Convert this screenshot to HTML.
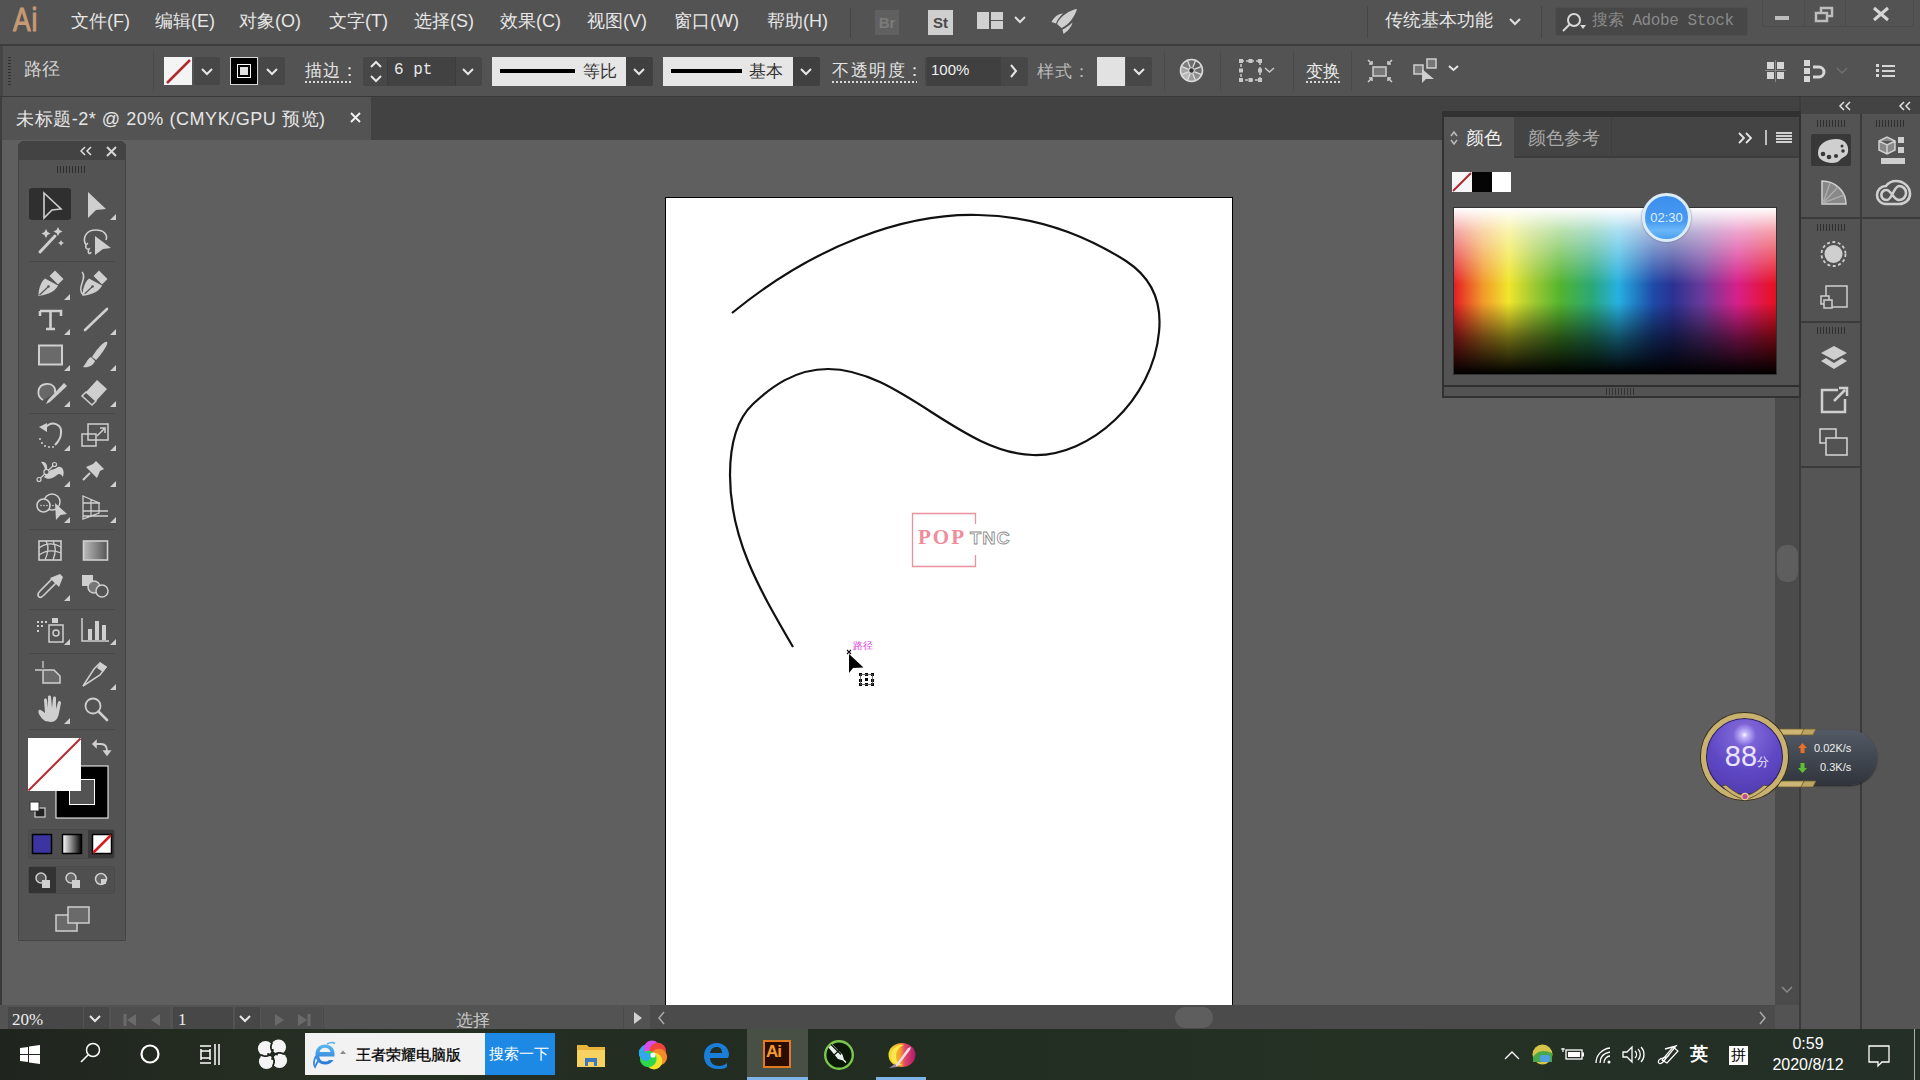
<!DOCTYPE html>
<html><head><meta charset="utf-8">
<style>
*{margin:0;padding:0;box-sizing:border-box}
html,body{width:1920px;height:1080px;overflow:hidden;background:#5f5f5f;font-family:"Liberation Sans",sans-serif;color:#e8e8e8}
.a{position:absolute}
#menubar{left:0;top:0;width:1920px;height:44px;background:#535353}
#menuline{left:0;top:44px;width:1920px;height:2px;background:#3d3d3d}
#ctrl{left:0;top:46px;width:1920px;height:50px;background:#535353}
#ctrlline{left:0;top:96px;width:1920px;height:2px;background:#383838}
#tabbar{left:0;top:97px;width:1920px;height:43px;background:#424242}
#canvas{left:0;top:140px;width:1800px;height:865px;background:#5f5f5f}
#status{left:0;top:1005px;width:1800px;height:24px;background:#535353}
#taskbar{left:0;top:1029px;width:1920px;height:51px;background:#222a21}
.menu{top:9px;font-size:18px;color:#e6e6e6;white-space:nowrap}
</style></head>
<body>
<div id="canvas" class="a"></div>
<div id="menubar" class="a"></div>
<div id="menuline" class="a"></div>
<div id="ctrl" class="a"></div>
<div id="ctrlline" class="a"></div>
<div id="tabbar" class="a"></div>
<div id="status" class="a"></div>
<div id="taskbar" class="a"></div>


<!-- TAB BAR -->
<div class="a" style="left:0;top:97px;width:371px;height:43px;background:#535353"></div>
<div class="a" style="left:0;top:97px;width:2px;height:43px;background:#3e3e3e"></div>
<div class="a" style="left:16px;top:107px;font-size:18px;color:#e6e6e6;white-space:nowrap;letter-spacing:0.55px">未标题-2* @ 20% (CMYK/GPU 预览)</div>
<svg class="a" style="left:349px;top:111px" width="13" height="13"><path d="M2 2 L11 11 M11 2 L2 11" stroke="#f0f0f0" stroke-width="2"/></svg>
<div class="a" style="left:0;top:140px;width:2px;height:865px;background:#3a3a3a"></div>

<!-- ARTBOARD -->
<div class="a" style="left:665px;top:197px;width:568px;height:812px;background:#fff;border:1px solid #000"></div>
<svg class="a" style="left:0;top:0" width="1920" height="1080"><path d="M732,313 C815,245 905,213 978,215 C1040,216 1090,238 1126,261 C1152,278 1162,303 1159,332 C1153,400 1090,457 1033,455 C960,453 900,369 828,369 C795,369 771,387 753,404 C736,420 730,445 730,475 C730,540 760,590 793,647" stroke="#111" stroke-width="2.2" fill="none"/></svg>


<!-- WATERMARK -->
<svg class="a" style="left:905px;top:505px" width="115" height="70">
<path d="M7.5 19 V8.5 H70.5 V19 M70.5 50 V61.5 H7.5 V19" stroke="#e9929e" stroke-width="1.3" fill="none"/>
<text x="13" y="39" font-family="Liberation Serif,serif" font-weight="bold" font-size="21" fill="#ef8d9b" letter-spacing="2">POP</text>
<text x="65" y="39.5" font-family="Liberation Sans,sans-serif" font-weight="bold" font-size="17" fill="#fff" stroke="#8a8a8a" stroke-width="0.8" letter-spacing="1" transform="translate(65 0) scale(1.08 1) translate(-65 0)">TNC</text>
</svg>
<!-- SMART GUIDE + CURSOR -->
<div class="a" style="left:853px;top:639px;font-size:10px;color:#e03fe0;white-space:nowrap;line-height:14px">路径</div>
<svg class="a" style="left:840px;top:645px" width="40" height="45">
<path d="M7 5 L11 9 M11 5 L7 9" stroke="#111" stroke-width="1.2"/>
<path d="M9 9 L9 28 L13 23 L23.5 22.5Z" fill="#000"/>
<g fill="#000"><rect x="19" y="28" width="3" height="3"/><rect x="25" y="28" width="3" height="3"/><rect x="31" y="28" width="3" height="3"/><rect x="19" y="34" width="3" height="3"/><rect x="31" y="34" width="3" height="3"/><rect x="19" y="38" width="3" height="3"/><rect x="25" y="38" width="3" height="3"/><rect x="31" y="38" width="3" height="3"/><rect x="25" y="33" width="3" height="3"/></g>
<rect x="20.5" y="29.5" width="12" height="10" stroke="#555" stroke-width="0.8" fill="none"/>
</svg>
<!-- TOOLBAR -->
<div class="a" style="left:18px;top:141px;width:108px;height:800px;background:#535353;border-radius:6px 6px 0 0;border:1px solid #464646"></div>
<div class="a" style="left:18px;top:141px;width:108px;height:19px;background:#434343;border-radius:6px 6px 0 0"></div>
<svg class="a" style="left:80px;top:146px" width="12" height="10"><path d="M5 1 L1 5 L5 9 M11 1 L7 5 L11 9" stroke="#e0e0e0" stroke-width="1.5" fill="none"/></svg>
<svg class="a" style="left:106px;top:146px" width="11" height="11"><path d="M1 1 L10 10 M10 1 L1 10" stroke="#d6d6d6" stroke-width="2"/></svg>
<div class="a" style="left:57px;top:166px;width:28px;height:7px;background:repeating-linear-gradient(90deg,#2e2e2e 0 1px,transparent 1px 3px)"></div>
<div class="a" style="left:29px;top:188px;width:42px;height:32px;background:#2f2f2f;border-radius:3px"></div>
<div class="a" style="left:29px;top:261px;width:86px;height:1px;background:#474747"></div>
<div class="a" style="left:29px;top:413px;width:86px;height:1px;background:#474747"></div>
<div class="a" style="left:29px;top:529px;width:86px;height:1px;background:#474747"></div>
<div class="a" style="left:29px;top:609px;width:86px;height:1px;background:#474747"></div>
<div class="a" style="left:29px;top:653px;width:86px;height:1px;background:#474747"></div>
<div class="a" style="left:29px;top:729px;width:86px;height:1px;background:#474747"></div>
<svg class="a" style="left:0;top:0" width="130" height="960">
<!-- selection -->
<path d="M44 193 L61 209 L52 210 L44 218Z" stroke="#cfcfcf" stroke-width="1.6" fill="none" stroke-linejoin="miter"/>
<!-- direct selection -->
<path d="M88 192 L106 209 L96 210 L88 218Z" fill="#cfcfcf"/><path d="M116 220 L116 214 L110 220Z" fill="#cfcfcf"/>
<!-- magic wand -->
<path d="M40 252 L55 236" stroke="#cfcfcf" stroke-width="3" stroke-linecap="round"/>
<path d="M46 229 l1.5 3 3 1.5 -3 1.5 -1.5 3 -1.5 -3 -3 -1.5 3 -1.5Z M58 227 l1.5 3 3 1.5 -3 1.5 -1.5 3 -1.5 -3 -3 -1.5 3 -1.5Z M61 240 l1 2 2 1 -2 1 -1 2 -1 -2 -2 -1 2 -1Z" fill="#cfcfcf"/>
<!-- lasso -->
<path d="M86 245 C82 238 86 230 96 230 C104 230 108 235 106 240" stroke="#cfcfcf" stroke-width="1.6" fill="none"/>
<path d="M88 243 C84 246 86 250 89 249 C87 253 90 255 91 252" stroke="#cfcfcf" stroke-width="1.5" fill="none"/>
<path d="M95 236 L111 248 L103 249 L95 255Z" fill="#cfcfcf"/>
<!-- pen -->
<g transform="translate(0 0)"><path d="M45 278.5 L58 285.5 C56 290 50 294.5 38.5 296 C38.5 290 40 283 45 278.5Z" fill="#cfcfcf"/><path d="M49.5 276 L55 270.5 L63.5 279 L58 284.5Z" fill="#cfcfcf"/><path d="M39.5 295 L48 287" stroke="#535353" stroke-width="1.2"/><circle cx="48.5" cy="286.5" r="1.3" fill="#535353"/></g><path d="M70 300 L70 294 L64 300Z" fill="#cfcfcf"/>
<!-- curvature pen -->
<g transform="translate(44 0)"><path d="M45 278.5 L58 285.5 C56 290 50 294.5 38.5 296 C38.5 290 40 283 45 278.5Z" fill="#cfcfcf"/><path d="M49.5 276 L55 270.5 L63.5 279 L58 284.5Z" fill="#cfcfcf"/><path d="M39.5 295 L48 287" stroke="#535353" stroke-width="1.2"/><circle cx="48.5" cy="286.5" r="1.3" fill="#535353"/></g>
<path d="M82 272 C86 276 82 282 81 287 C80 292 82 295 85 294" stroke="#cfcfcf" stroke-width="1.5" fill="none"/>
<!-- type -->
<path d="M40 311 H61 V316 M40 316 V311 M50.5 311 V329 M46 329 H55" stroke="#cfcfcf" stroke-width="2.6" fill="none"/><path d="M70 335 L70 329 L64 335Z" fill="#cfcfcf"/>
<!-- line -->
<path d="M85 330 L107 309" stroke="#cfcfcf" stroke-width="2.6" stroke-linecap="round"/><path d="M116 335 L116 329 L110 335Z" fill="#cfcfcf"/>
<!-- rect -->
<rect x="39" y="345.5" width="23" height="19" stroke="#cfcfcf" stroke-width="2" fill="#6a6a6a"/><path d="M70 371 L70 365 L64 371Z" fill="#cfcfcf"/>
<!-- paintbrush -->
<path d="M107 342 C109 344 100 356 96 360 L92 357 C95 352 104 340 107 342Z" fill="#cfcfcf"/><path d="M91 357 L95 361 C93 366 88 368 83 367 C86 364 87 359 91 357Z" fill="#cfcfcf"/><path d="M116 371 L116 365 L110 371Z" fill="#cfcfcf"/>
<!-- blob brush -->
<path d="M43 400 C36 396 37 385 46 384 C53 383 56 388 55 393" stroke="#cfcfcf" stroke-width="1.8" fill="#686868"/>
<path d="M64 383 L67 386 L50 402 L46 404 L48 400Z" fill="#cfcfcf"/><path d="M70 407 L70 401 L64 407Z" fill="#cfcfcf"/>
<!-- eraser -->
<path d="M97 380 L107 389 L96 401 L86 392Z" fill="#cfcfcf"/><path d="M86 392 L96 401 L92 405 L82 396Z" stroke="#cfcfcf" stroke-width="1.5" fill="#535353"/><path d="M116 407 L116 401 L110 407Z" fill="#cfcfcf"/>
<!-- rotate -->
<path d="M45 428 C52 420 62 424 61 433 C61 438 58 442 55 445" stroke="#cfcfcf" stroke-width="2" fill="none"/>
<path d="M39 427 L47 423 L47 432Z" fill="#cfcfcf"/>
<g fill="#cfcfcf"><circle cx="40" cy="439" r="1"/><circle cx="42" cy="443" r="1"/><circle cx="45" cy="446" r="1"/><circle cx="49" cy="447" r="1"/><circle cx="53" cy="447" r="1"/></g><path d="M70 451 L70 445 L64 451Z" fill="#cfcfcf"/>
<!-- scale -->
<rect x="82" y="434" width="14" height="12" stroke="#cfcfcf" stroke-width="1.5" fill="none"/><rect x="88" y="424" width="20" height="16" stroke="#cfcfcf" stroke-width="1.5" fill="none"/><path d="M97 436 L104 429 M100 428 H105 V433" stroke="#cfcfcf" stroke-width="1.5" fill="none"/><path d="M116 451 L116 445 L110 451Z" fill="#cfcfcf"/>
<!-- warp -->
<path d="M41 462 C45 461 48 465 47 469 C51 471 55 469 58 467 C62 466 65 470 63 477 C61 474 59 473 57 475 C53 479 47 480 44 477 C47 473 45 466 41 462Z" fill="#cfcfcf"/><path d="M39 479.5 L54.5 464.5" stroke="#535353" stroke-width="2.6"/><path d="M39 479.5 L54.5 464.5" stroke="#cfcfcf" stroke-width="1.2"/><circle cx="39" cy="479.5" r="2" stroke="#cfcfcf" stroke-width="1.2" fill="#535353"/><circle cx="54.5" cy="464.5" r="2" stroke="#cfcfcf" stroke-width="1.2" fill="#535353"/><circle cx="46.5" cy="472" r="2.6" stroke="#cfcfcf" stroke-width="1.2" fill="#535353"/><path d="M70 487 L70 481 L64 487Z" fill="#cfcfcf"/>
<!-- pin -->
<path d="M96 461 L104 469 L100 471 L97 478 L86 467 L93 464Z" fill="#cfcfcf"/><path d="M90 473 L83 480" stroke="#cfcfcf" stroke-width="2"/><path d="M116 487 L116 481 L110 487Z" fill="#cfcfcf"/>
<!-- shape builder -->
<circle cx="52" cy="502" r="8" stroke="#cfcfcf" stroke-width="1.5" fill="none"/><circle cx="43.5" cy="505.5" r="6.5" stroke="#cfcfcf" stroke-width="1.5" fill="#535353"/>
<g fill="#cfcfcf"><circle cx="41" cy="505.5" r=".8"/><circle cx="44" cy="505.5" r=".8"/><circle cx="47" cy="505.5" r=".8"/><circle cx="50" cy="505.5" r=".8"/><circle cx="53" cy="505.5" r=".8"/></g>
<path d="M55 503 L67 514 L60.5 515 L56 520Z" fill="#cfcfcf"/><path d="M70 523 L70 517 L64 523Z" fill="#cfcfcf"/>
<!-- perspective grid -->
<path d="M83 496 L99 503 V513 L83 519Z M83 503 H100 M83 511 H108 M91 499 V517 M83 516 H108" stroke="#cfcfcf" stroke-width="1.3" fill="none"/><path d="M116 523 L116 517 L110 523Z" fill="#cfcfcf"/>
<!-- mesh -->
<rect x="39" y="541" width="22" height="19" stroke="#cfcfcf" stroke-width="1.6" fill="none"/><path d="M39 548 C46 543 54 543 61 547 M39 555 C46 550 54 550 61 553 M46 541 C50 548 47 555 45 560 M53 541 C57 548 55 555 53 560" stroke="#cfcfcf" stroke-width="1.3" fill="none"/>
<!-- gradient -->
<defs><linearGradient id="gr" x1="0" x2="1"><stop offset="0" stop-color="#bbb"/><stop offset="1" stop-color="#555"/></linearGradient><linearGradient id="gr2" x1="0" x2="1"><stop offset="0" stop-color="#fff"/><stop offset="1" stop-color="#000"/></linearGradient></defs>
<rect x="83.5" y="541" width="24" height="19" stroke="#cfcfcf" stroke-width="1.6" fill="url(#gr)"/>
<!-- eyedropper -->
<path d="M39 597 C37 595 38 593 40 591 L52 579 L56 583 L44 595 C42 597 40 598 39 597Z" stroke="#cfcfcf" stroke-width="1.6" fill="none"/><path d="M50 578 L60 574 L63 577 L59 587Z" fill="#cfcfcf"/><path d="M70 601 L70 595 L64 601Z" fill="#cfcfcf"/>
<!-- blend -->
<rect x="82" y="575" width="11" height="11" fill="#cfcfcf"/><circle cx="94" cy="587" r="6" stroke="#cfcfcf" stroke-width="1.5" fill="#777"/><circle cx="102" cy="591" r="6" stroke="#cfcfcf" stroke-width="1.5" fill="#535353"/>
<!-- symbol sprayer -->
<g fill="#cfcfcf"><rect x="37" y="621" width="2" height="2"/><rect x="41" y="621" width="2" height="2"/><rect x="45" y="621" width="2" height="2"/><rect x="37" y="625" width="2" height="2"/><rect x="41" y="625" width="2" height="2"/><rect x="37" y="630" width="2" height="2"/></g><rect x="49" y="625" width="14" height="17" stroke="#cfcfcf" stroke-width="1.5" fill="none"/><circle cx="56" cy="633" r="3" stroke="#cfcfcf" stroke-width="1.5" fill="none"/><rect x="52" y="618" width="6" height="5" fill="#cfcfcf"/><path d="M70 645 L70 639 L64 645Z" fill="#cfcfcf"/>
<!-- graph -->
<path d="M82 618 V641 H109" stroke="#cfcfcf" stroke-width="1.5" fill="none"/><rect x="88" y="629" width="4" height="11" fill="#cfcfcf"/><rect x="95" y="621" width="4" height="19" fill="#cfcfcf"/><rect x="102" y="625" width="4" height="15" fill="#cfcfcf"/><path d="M116 645 L116 639 L110 645Z" fill="#cfcfcf"/>
<!-- artboard -->
<path d="M43 661 V668 M35 670 H42" stroke="#cfcfcf" stroke-width="1.3"/><path d="M43 670 H54 L60 676 V683 H43Z" stroke="#cfcfcf" stroke-width="1.5" fill="#6a6a6a"/>
<!-- slice/knife -->
<path d="M100 663 L106 667 L100 675 L83 686 L94 669Z" stroke="#cfcfcf" stroke-width="1.5" fill="none"/><path d="M100 662 L107 667 L103 672 L97 668Z" fill="#cfcfcf"/><path d="M116 690 L116 684 L110 690Z" fill="#cfcfcf"/>
<!-- hand -->
<path d="M45 721 C40 717 37 712 39 710 C41 709 43 712 45 713 L44 700 C44 698 47 698 47 700 L48 708 L48 697 C48 695 51 695 51 697 L52 708 L53 698 C53 696 56 696 56 698 L56 709 L58 702 C59 700 61 701 61 703 L59 713 C58 719 55 722 51 722Z" fill="#cfcfcf"/><path d="M70 724 L70 718 L64 724Z" fill="#cfcfcf"/>
<!-- zoom -->
<circle cx="93" cy="706" r="7.5" stroke="#cfcfcf" stroke-width="1.8" fill="none"/><path d="M98.5 711.5 L107 720" stroke="#cfcfcf" stroke-width="2.6" stroke-linecap="round"/>
<!-- fill/stroke -->
<rect x="56" y="766" width="52" height="52" fill="#000" stroke="#fff" stroke-width="1"/>
<rect x="69.5" y="779.5" width="25" height="25" fill="#535353" stroke="#fff" stroke-width="1"/>
<rect x="28" y="738" width="53" height="53" fill="#fff"/>
<path d="M28.5 790.5 L80.5 738.5" stroke="#b7282e" stroke-width="2"/>
<!-- swap -->
<path d="M96 744 L101 744 C105 744 107 747 107 751" stroke="#cfcfcf" stroke-width="1.8" fill="none"/><path d="M96 741 L93 744 L96 747Z M104 751 L107 755 L110 751Z" fill="#cfcfcf" stroke="#cfcfcf" stroke-width="1.5"/>
<!-- default -->
<rect x="35" y="808" width="10" height="9" fill="#222" stroke="#cfcfcf" stroke-width="1.2"/><rect x="30" y="802" width="9" height="9" fill="#fff" stroke="#333" stroke-width="1"/>
<!-- color mode buttons -->
<rect x="28.5" y="829.5" width="86" height="29" fill="#4f4f4f" stroke="#4a4a4a" rx="3"/>
<rect x="88" y="830" width="26" height="28" fill="#3a3a3a"/>
<rect x="32.5" y="834.5" width="19" height="19" fill="#3c34a0" stroke="#000" stroke-width="1.5"/>
<rect x="62.5" y="834.5" width="19" height="19" fill="url(#gr2)" stroke="#000" stroke-width="1.5"/>
<rect x="92.5" y="834.5" width="19" height="19" fill="#fff" stroke="#000" stroke-width="1.5"/><path d="M93 853 L111 835" stroke="#d01e22" stroke-width="2.5"/>
<!-- draw modes -->
<rect x="28.5" y="866.5" width="86" height="27" fill="#4f4f4f" stroke="#4a4a4a" rx="3"/>
<rect x="29" y="867" width="27" height="26" fill="#333"/>
<circle cx="41" cy="878" r="5" stroke="#cfcfcf" stroke-width="1.5" fill="#555"/><rect x="42" y="880" width="8" height="8" fill="#cfcfcf"/>
<circle cx="71" cy="878" r="5" stroke="#cfcfcf" stroke-width="1.5" fill="#666"/><rect x="72" y="880" width="8" height="8" fill="#cfcfcf"/>
<circle cx="101" cy="879" r="5.5" stroke="#cfcfcf" stroke-width="1.5" fill="#666"/><rect x="101" y="879" width="5" height="5" fill="#cfcfcf"/>
<!-- screen mode -->
<rect x="56" y="915" width="21" height="16" stroke="#cfcfcf" stroke-width="1.5" fill="#6a6a6a"/><rect x="68" y="907" width="21" height="16" stroke="#cfcfcf" stroke-width="1.5" fill="#6a6a6a"/>
</svg>

<!-- V SCROLL -->
<div class="a" style="left:1775px;top:140px;width:25px;height:865px;background:#4b4b4b"></div>
<div class="a" style="left:1777px;top:545px;width:21px;height:37px;background:#5e5e5e;border-radius:9px"></div>
<svg class="a" style="left:1780px;top:985px" width="14" height="10"><path d="M2 2 L7 7 L12 2" stroke="#8a8a8a" stroke-width="1.5" fill="none"/></svg>
<!-- DOCK -->
<div class="a" style="left:1800px;top:97px;width:120px;height:932px;background:#555"></div>
<div class="a" style="left:1799px;top:97px;width:2px;height:932px;background:#3b3b3b"></div>
<div class="a" style="left:1860px;top:114px;width:2px;height:915px;background:#3b3b3b"></div>
<div class="a" style="left:1801px;top:97px;width:119px;height:17px;background:#434343"></div>
<svg class="a" style="left:1838px;top:101px" width="14" height="10"><path d="M6 1 L2 5 L6 9 M12 1 L8 5 L12 9" stroke="#e0e0e0" stroke-width="1.5" fill="none"/></svg>
<svg class="a" style="left:1898px;top:101px" width="14" height="10"><path d="M6 1 L2 5 L6 9 M12 1 L8 5 L12 9" stroke="#e0e0e0" stroke-width="1.5" fill="none"/></svg>
<div class="a" style="left:1801px;top:114px;width:59px;height:103px;background:#535353"></div>
<div class="a" style="left:1862px;top:114px;width:58px;height:103px;background:#535353"></div>
<div class="a" style="left:1801px;top:217px;width:119px;height:2px;background:#3b3b3b"></div>
<div class="a" style="left:1801px;top:219px;width:59px;height:102px;background:#535353"></div>
<div class="a" style="left:1801px;top:321px;width:59px;height:2px;background:#3b3b3b"></div>
<div class="a" style="left:1801px;top:323px;width:59px;height:143px;background:#535353"></div>
<div class="a" style="left:1801px;top:466px;width:59px;height:2px;background:#3b3b3b"></div>
<div class="a" style="left:1817px;top:120px;width:28px;height:7px;background:repeating-linear-gradient(90deg,#2e2e2e 0 1px,transparent 1px 3px)"></div><div class="a" style="left:1876px;top:120px;width:28px;height:7px;background:repeating-linear-gradient(90deg,#2e2e2e 0 1px,transparent 1px 3px)"></div><div class="a" style="left:1817px;top:224px;width:28px;height:7px;background:repeating-linear-gradient(90deg,#2e2e2e 0 1px,transparent 1px 3px)"></div><div class="a" style="left:1817px;top:327px;width:28px;height:7px;background:repeating-linear-gradient(90deg,#2e2e2e 0 1px,transparent 1px 3px)"></div>
<div class="a" style="left:1811px;top:134px;width:40px;height:32px;background:#383838;border-radius:2px"></div>
<svg class="a" style="left:0;top:0" width="1920" height="1080">
<!-- palette -->
<path d="M1818 153 C1818 143 1828 139 1836 139 C1846 139 1849 146 1848 152 C1847 157 1842 157 1840 160 C1838 163 1832 164 1826 162 C1820 160 1818 157 1818 153Z" fill="#cfcfcf"/>
<g fill="#383838"><circle cx="1823" cy="154" r="2.3"/><circle cx="1829" cy="157" r="2.3"/><circle cx="1836" cy="156" r="2.1"/><circle cx="1843" cy="151" r="1.8"/><circle cx="1842" cy="146" r="1.5"/></g>
<!-- color guide -->
<path d="M1822 181 V204 H1846 C1846 191 1835 181 1822 181Z" stroke="#cfcfcf" stroke-width="1.5" fill="#888"/>
<path d="M1823 203 L1830 183 M1823 203 L1838 187 M1823 203 L1844 195" stroke="#aaa" stroke-width="1.5"/>
<!-- appearance -->
<circle cx="1833.5" cy="254" r="9" fill="#cfcfcf"/><circle cx="1833.5" cy="254" r="12" stroke="#cfcfcf" stroke-width="1.8" stroke-dasharray="3 2.5" fill="none"/>
<!-- transform-ish -->
<rect x="1826" y="286" width="21" height="21" stroke="#cfcfcf" stroke-width="1.5" fill="none"/><rect x="1821" y="296" width="8" height="8" stroke="#cfcfcf" stroke-width="1.5" fill="#535353"/><rect x="1824" y="300" width="8" height="8" stroke="#cfcfcf" stroke-width="1.5" fill="#535353"/>
<!-- layers -->
<path d="M1821 353 L1834 346 L1847 353 L1834 360Z" fill="#cfcfcf"/><path d="M1821 361 L1826 358 L1834 363 L1842 358 L1847 361 L1834 369Z" fill="#cfcfcf"/>
<!-- export -->
<path d="M1838 390 H1822 V412 H1845 V399" stroke="#cfcfcf" stroke-width="2.5" fill="none"/><path d="M1834 401 L1845 390 M1839 388 H1847 V396" stroke="#cfcfcf" stroke-width="2.5" fill="none"/>
<!-- artboards -->
<rect x="1820" y="429" width="16" height="14" stroke="#cfcfcf" stroke-width="1.6" fill="none"/><rect x="1826" y="438" width="21" height="17" stroke="#cfcfcf" stroke-width="1.6" fill="#535353"/>
<!-- libraries col2 -->
<path d="M1879 141 L1887 137 L1895 141 V150 L1887 154 L1879 150Z M1879 141 L1887 145 L1895 141 M1887 145 V154" stroke="#cfcfcf" stroke-width="1.5" fill="#888"/>
<rect x="1898" y="137" width="6" height="6" fill="#cfcfcf"/><rect x="1898" y="147" width="6" height="6" fill="#cfcfcf"/>
<rect x="1881" y="158" width="24" height="6" fill="#cfcfcf"/>
<!-- CC -->
<path d="M1886 204 C1880 204 1877 199 1877 195 C1877 190 1881 186 1886 186 C1889 182 1893 181 1896 181 C1904 181 1910 187 1910 194 C1910 200 1905 204 1899 204Z" stroke="#cfcfcf" stroke-width="2.6" fill="none"/>
<path d="M1899 200 C1893 200 1891 189 1886 190 C1882 190 1881 194 1881.5 196 C1882 199 1884 200 1887 200 C1892 200 1894 186 1899 186 C1903 186 1906 189 1906 193 C1906 197 1903 200 1899 200Z" stroke="#cfcfcf" stroke-width="2.6" fill="none"/>
</svg>
<!-- COLOR PANEL -->
<div class="a" style="left:1442px;top:111px;width:359px;height:287px;background:#535353;border:2px solid #313131;border-top-width:6px"></div>
<div class="a" style="left:1514px;top:117px;width:285px;height:41px;background:#444;border-bottom:2px solid #3c3c3c"></div>
<div class="a" style="left:1611px;top:117px;width:1px;height:41px;background:#3e3e3e"></div>
<svg class="a" style="left:1449px;top:129px" width="10" height="18"><path d="M2 7 L5 3 L8 7 M2 11 L5 15 L8 11" stroke="#bdbdbd" stroke-width="1.5" fill="none"/></svg>
<div class="a" style="left:1466px;top:126px;font-size:18px;color:#efefef">颜色</div>
<div class="a" style="left:1528px;top:126px;font-size:18px;color:#a9a9a9">颜色参考</div>
<svg class="a" style="left:1737px;top:131px" width="18" height="14"><path d="M2 2 L7 7 L2 12 M9 2 L14 7 L9 12" stroke="#e6e6e6" stroke-width="1.8" fill="none"/></svg>
<div class="a" style="left:1765px;top:130px;width:2px;height:15px;background:#bdbdbd"></div>
<div class="a" style="left:1776px;top:132px;width:16px;height:11px;background:repeating-linear-gradient(#d0d0d0 0 2px,transparent 2px 3px)"></div>
<svg class="a" style="left:1452px;top:172px" width="60" height="20"><rect x="0" y="0" width="20" height="20" fill="#f7f7f7"/><path d="M1 19 L19 1" stroke="#b0282c" stroke-width="2"/><rect x="20" y="0" width="20" height="20" fill="#050505"/><rect x="40" y="0" width="19" height="20" fill="#fff"/></svg>
<div class="a" style="left:1453px;top:207px;width:324px;height:168px;border:1px solid #333;background:linear-gradient(to bottom,#fff 0%,rgba(255,255,255,0.6) 14%,rgba(255,255,255,0) 46%,rgba(0,0,0,0) 57%,rgba(0,0,0,0.55) 78%,#000 100%),linear-gradient(to right,#e31e24 0%,#f29a2a 9%,#f0e62c 17%,#9cc832 25%,#52b42e 33%,#2aa87a 43%,#26b0e2 51%,#1e4aa8 62%,#2a3292 68%,#6a3a9a 77%,#d8208a 88%,#e8101e 100%)"></div>
<div class="a" style="left:1442px;top:385px;width:359px;height:2px;background:#2f2f2f"></div>
<div class="a" style="left:1606px;top:388px;width:30px;height:7px;background:repeating-linear-gradient(90deg,#333 0 1px,transparent 1px 3px)"></div>
<!-- TIMER -->
<div class="a" style="left:1642px;top:193px;width:49px;height:49px;border-radius:50%;background:linear-gradient(#3b8eec 0%,#4a9cf2 60%,#6ab8f8 80%,#4a9cf0 100%);border:3px solid #dcecfb;box-shadow:0 0 2px #666"></div>
<div class="a" style="left:1642px;top:210px;width:49px;text-align:center;font-size:13px;color:#dceeff">02:30</div>

<!-- STATUS BAR -->
<div class="a" style="left:650px;top:1005px;width:1125px;height:24px;background:#4b4b4b"></div>
<div class="a" style="left:1175px;top:1007px;width:38px;height:21px;background:#5e5e5e;border-radius:10px"></div>
<svg class="a" style="left:656px;top:1010px" width="12" height="16"><path d="M8 2 L3 8 L8 14" stroke="#aaa" stroke-width="1.5" fill="none"/></svg>
<svg class="a" style="left:1756px;top:1010px" width="12" height="16"><path d="M4 2 L9 8 L4 14" stroke="#aaa" stroke-width="1.5" fill="none"/></svg>
<div class="a" style="left:8px;top:1007px;width:75px;height:22px;background:#474747"></div>
<div class="a" style="left:84px;top:1007px;width:25px;height:22px;background:#474747"></div>
<div class="a" style="left:12px;top:1010px;font-size:17px;color:#eee;font-family:'Liberation Serif',serif">20%</div>
<svg class="a" style="left:88px;top:1014px" width="14" height="10"><path d="M2 2 L7 7 L12 2" stroke="#e6e6e6" stroke-width="2" fill="none"/></svg>
<div class="a" style="left:111px;top:1007px;width:59px;height:22px;background:#4e4e4e"></div>
<svg class="a" style="left:120px;top:1011px" width="50" height="18"><path d="M5 3 V15" stroke="#6a6a6a" stroke-width="3"/><path d="M16 3 L7 9 L16 15Z M40 3 L31 9 L40 15Z" fill="#6a6a6a"/></svg>
<div class="a" style="left:173px;top:1007px;width:60px;height:22px;background:#474747"></div>
<div class="a" style="left:235px;top:1007px;width:25px;height:22px;background:#474747"></div>
<div class="a" style="left:178px;top:1010px;font-size:17px;color:#eee;font-family:'Liberation Serif',serif">1</div>
<svg class="a" style="left:238px;top:1014px" width="14" height="10"><path d="M2 2 L7 7 L12 2" stroke="#e6e6e6" stroke-width="2" fill="none"/></svg>
<div class="a" style="left:261px;top:1007px;width:61px;height:22px;background:#4e4e4e"></div>
<svg class="a" style="left:270px;top:1011px" width="50" height="18"><path d="M5 3 L14 9 L5 15Z M28 3 L37 9 L28 15Z" fill="#6a6a6a"/><path d="M39 3 V15" stroke="#6a6a6a" stroke-width="3"/></svg>
<div class="a" style="left:323px;top:1007px;width:1px;height:22px;background:#4a4a4a"></div>
<div class="a" style="left:456px;top:1009px;font-size:17px;color:#c8c8c8">选择</div>
<div class="a" style="left:623px;top:1007px;width:1px;height:22px;background:#4a4a4a"></div>
<svg class="a" style="left:632px;top:1010px" width="12" height="16"><path d="M2 2 L10 8 L2 14Z" fill="#d0d0d0"/></svg>
<!-- TASKBAR -->
<div class="a" style="left:0;top:1029px;width:1920px;height:51px;background:linear-gradient(90deg,#1f251e 0%,#272f23 18%,#222c21 40%,#243123 70%,#242f27 100%)"></div>
<div class="a" style="left:1914px;top:1029px;width:1px;height:51px;background:#aab0a8"></div>
<svg class="a" style="left:0;top:1029px" width="1920" height="51">
<g fill="#fff"><path d="M20 19 L28 18 V25 H20Z M29 17.5 L40 16 V25 H29Z M20 26 H28 V33 L20 32Z M29 26 H40 V35 L29 33.5Z"/></g>
<circle cx="93" cy="21" r="6.5" stroke="#fff" stroke-width="1.5" fill="none"/><path d="M88 26 L81 33" stroke="#fff" stroke-width="1.6"/>
<circle cx="150" cy="25" r="8.5" stroke="#fff" stroke-width="2.2" fill="none"/>
<path d="M200 17 H211 M200 34 H211 M201 20 V31 M210 20 V31 M201 22 H210 M201 29 H210 M215 15 V36 M219 15 V36" stroke="#fff" stroke-width="1.5" fill="none"/>
<circle cx="265.5" cy="19.5" r="7.6" fill="#f4f4f4"/><circle cx="278.5" cy="18" r="7.6" fill="#f4f4f4"/><circle cx="279.5" cy="31.5" r="7.6" fill="#f4f4f4"/><circle cx="266.5" cy="32.5" r="7.6" fill="#f4f4f4"/><path d="M277.8 25.6 L276.5 25.3 L275.3 24.9 L274.1 24.2 L273.1 23.4 L272.3 22.4 L271.6 21.2 L271.2 20.0 L270.9 18.7 L270.9 17.3 L271.2 16.0 L271.6 14.8 L272.3 13.6 M273.1 20.2 L272.8 21.5 L272.4 22.7 L271.7 23.9 L270.9 24.9 L269.9 25.7 L268.7 26.4 L267.5 26.8 L266.2 27.1 L264.8 27.1 L263.5 26.8 L262.3 26.4 L261.1 25.7 M267.2 24.9 L268.5 25.2 L269.7 25.6 L270.9 26.3 L271.9 27.1 L272.7 28.1 L273.4 29.3 L273.8 30.5 L274.1 31.8 L274.1 33.2 L273.8 34.5 L273.4 35.7 L272.7 36.9 M271.9 30.8 L272.2 29.5 L272.6 28.3 L273.3 27.1 L274.1 26.1 L275.1 25.3 L276.3 24.6 L277.5 24.2 L278.8 23.9 L280.2 23.9 L281.5 24.2 L282.7 24.6 L283.9 25.3" stroke="#1f2420" stroke-width="1.8" fill="none"/>
</svg>
<div class="a" style="left:305px;top:1033px;width:180px;height:42px;background:#f2f2f2"></div>
<div class="a" style="left:485px;top:1033px;width:70px;height:42px;background:#1e88e5"></div>
<div class="a" style="left:489px;top:1045px;font-size:15px;color:#fff;white-space:nowrap">搜索一下</div>
<div class="a" style="left:356px;top:1046px;font-size:15px;color:#000;white-space:nowrap;-webkit-text-stroke:0.3px #000">王者荣耀电脑版</div>
<svg class="a" style="left:310px;top:1040px" width="40" height="30"><defs><linearGradient id="ieg" x1="0" y1="0" x2="0" y2="1"><stop offset="0" stop-color="#5ab8f0"/><stop offset="1" stop-color="#2a78d8"/></linearGradient></defs><path d="M24.5 13.5 C24.5 8 20.5 4.5 15 4.5 C9.5 4.5 5.5 8.5 5.5 14.5 C5.5 20.5 9.5 24.5 15 24.5 C19 24.5 22 22.5 23.5 20 L19 20 C18 21 16.5 21.5 15 21.5 C11.5 21.5 9.5 19.5 9.3 16.5 H24.5Z M9.5 12 C10 9.5 12 7.8 15 7.8 C18 7.8 20 9.5 20.5 12Z" fill="url(#ieg)"/><path d="M6 16 C3.5 21 3.5 25 5 27 C6 25 7 22 9 20" stroke="#3a88dc" stroke-width="1.8" fill="none"/><path d="M17 4 C20 2.5 23 2 25 3.5" stroke="#5ab0ea" stroke-width="1.6" fill="none"/><path d="M30 14 L33 10.5 L36 14Z" fill="#8a8a8a"/></svg>
<!-- folder -->
<svg class="a" style="left:575px;top:1041px" width="32" height="28"><path d="M2 4 H12 L14 6 H30 V26 H2Z" fill="#e8b53a"/><path d="M2 9 H30 V26 H2Z" fill="#f7d260"/><rect x="10" y="17" width="12" height="8" fill="#3b78c0"/><rect x="13" y="21" width="6" height="4" fill="#f7d260"/></svg>
<!-- colorful -->
<svg class="a" style="left:637px;top:1039px" width="32" height="32" viewBox="0 0 32 32"><defs><clipPath id="cpb"><path d="M16 16 L3.14 31.32 L-3.70 19.47 L-2.79 9.16Z"/></clipPath></defs><circle cx="10.17" cy="13.88" r="8.3" fill="#30a8ec"/><circle cx="14.92" cy="9.89" r="8.3" fill="#d84ee8"/><circle cx="20.75" cy="12.01" r="8.3" fill="#f0443c"/><circle cx="21.83" cy="18.12" r="8.3" fill="#f58a2a"/><circle cx="17.08" cy="22.11" r="8.3" fill="#f2e22a"/><circle cx="11.25" cy="19.99" r="8.3" fill="#2ed84a"/><circle cx="10.17" cy="13.88" r="8.3" fill="#30a8ec" clip-path="url(#cpb)"/><circle cx="16" cy="16" r="2.6" fill="#f4fff4"/></svg>
<!-- edge -->
<svg class="a" style="left:701px;top:1041px" width="30" height="28"><path d="M27 17 H9 C9 22 13 25 18 25 C21 25 24 24 26 22 V26 C23 28 20 28 17 28 C8 28 3 22 3 15 C3 7 9 2 16 2 C23 2 28 7 28 14Z M9 12 H21 C21 8 19 6 16 6 C12 6 10 8 9 12Z" fill="#1a7ed8"/></svg>
<!-- Ai active -->
<div class="a" style="left:747px;top:1029px;width:61px;height:51px;background:#485046"></div>
<div class="a" style="left:747px;top:1077px;width:61px;height:3px;background:#7fb4e8"></div>
<div class="a" style="left:763px;top:1040px;width:28px;height:28px;background:#2b0d00;border:2px solid #e07a20"></div>
<div class="a" style="left:766px;top:1042px;font-size:17px;font-weight:bold;color:#f39a32;letter-spacing:-1px">Ai</div>
<!-- green pen -->
<svg class="a" style="left:823px;top:1039px" width="32" height="32"><circle cx="16" cy="16" r="13.8" stroke="#7cc84a" stroke-width="2.4" fill="#0b1709"/><path d="M5.5 8.5 L9 5 L19.5 15.5 L21 20.5 L23.5 23 L22.5 24 L20 21.5 L15 20Z" fill="#e8eee8"/><path d="M8 5.5 L18 15.5 M10 17 L17 10.5" stroke="#0b1709" stroke-width="1.2"/></svg>
<!-- last colorful -->
<svg class="a" style="left:885px;top:1039px" width="34" height="32"><defs><linearGradient id="lc1" x1="0" y1="0" x2="1" y2="0"><stop offset="0" stop-color="#f5e030"/><stop offset=".45" stop-color="#f59a2a"/><stop offset=".6" stop-color="#e04a6a"/><stop offset="1" stop-color="#b0186a"/></linearGradient></defs><ellipse cx="17" cy="16" rx="13.5" ry="12" fill="url(#lc1)"/><path d="M6 18 C6 10 12 5 19 6 C14 8 11 12 11 17 C11 22 14 25 18 26 C11 27 6 23 6 18Z" fill="#fbe84a"/><path d="M10 27 L23 9 L26 8 L25 11 L12 28Z" fill="#f0d8e8"/><path d="M4 29 L10 25 L12 28Z" fill="#9a8aa0"/></svg>
<div class="a" style="left:876px;top:1077px;width:50px;height:3px;background:#7fb4e8"></div>
<!-- tray -->
<svg class="a" style="left:1495px;top:1029px" width="270" height="51">
<path d="M10 30 L17 23 L24 30" stroke="#fff" stroke-width="1.3" fill="none"/>
<circle cx="47.5" cy="25.5" r="10" fill="#d4c54a"/><path d="M38 28 C42 22 48 20 57 24 V33 H38Z" fill="#47a84a"/><rect x="45" y="26" width="10" height="7" rx="2" fill="#4fa0e0"/>
<rect x="71" y="21" width="16" height="9" stroke="#fff" stroke-width="1.3" fill="none"/><rect x="73" y="23" width="12" height="5" fill="#fff"/><rect x="87" y="23.5" width="2" height="4" fill="#fff"/><path d="M68 19 V23 M66 20 H70" stroke="#fff" stroke-width="1.2"/>
<path d="M101 34 C101 26 107 20 115 19 M105 34 C105 28 109 24 115 23 M109 34 C109 30 112 27 115 27" stroke="#fff" stroke-width="1.3" fill="none"/><circle cx="114" cy="33" r="1.5" fill="#fff"/>
<path d="M128 23 H132 L137 18 V33 L132 28 H128Z" stroke="#fff" stroke-width="1.3" fill="none"/><path d="M140 22 C142 24 142 27 140 29 M143 20 C146 23 146 28 143 31 M146 18 C150 22 150 29 146 33" stroke="#fff" stroke-width="1.3" fill="none"/>
<path d="M170 20 L181 17 L168 33 C165 36 162 34 164 31 C166 28 172 30 174 26" stroke="#fff" stroke-width="1.3" fill="none"/><path d="M178 18 L183 22 L172 34 L167 31Z" stroke="#fff" stroke-width="1.2" fill="none"/>
</svg>
<div class="a" style="left:1690px;top:1042px;font-size:18px;font-weight:bold;color:#fff">英</div>
<div class="a" style="left:1729px;top:1046px;width:19px;height:19px;background:#fff"></div>
<div class="a" style="left:1729px;top:1045px;width:19px;font-size:15px;color:#000;text-align:center;line-height:20px">拼</div>
<div class="a" style="left:1762px;top:1033px;width:92px;text-align:center;font-size:16px;color:#fff;line-height:21px">0:59<br>2020/8/12</div>
<svg class="a" style="left:1866px;top:1043px" width="26" height="26"><path d="M3 3 H23 V19 H16 L12 23 V19 H3Z" stroke="#fff" stroke-width="1.3" fill="none"/></svg>
<!-- MENUBAR -->
<div class="a" style="left:13px;top:2px;font-size:33px;font-weight:normal;color:#c89a74;letter-spacing:1px;line-height:36px;transform:scaleX(0.8);transform-origin:0 0;-webkit-text-stroke:1px #c89a74">Ai</div>
<div class="a menu" style="left:71px">文件(F)</div>
<div class="a menu" style="left:155px">编辑(E)</div>
<div class="a menu" style="left:239px">对象(O)</div>
<div class="a menu" style="left:329px">文字(T)</div>
<div class="a menu" style="left:414px">选择(S)</div>
<div class="a menu" style="left:500px">效果(C)</div>
<div class="a menu" style="left:587px">视图(V)</div>
<div class="a menu" style="left:674px">窗口(W)</div>
<div class="a menu" style="left:767px">帮助(H)</div>
<div class="a" style="left:850px;top:8px;width:1px;height:30px;background:#454545"></div>
<div class="a" style="left:875px;top:10px;width:24px;height:25px;background:#606060;color:#7c7c7c;font-size:15px;font-weight:bold;text-align:center;line-height:25px">Br</div>
<div class="a" style="left:928px;top:10px;width:25px;height:25px;background:#cfcfcf;color:#4a4a4a;font-size:15px;font-weight:bold;text-align:center;line-height:25px">St</div>
<div class="a" style="left:977px;top:12px;width:12px;height:17px;background:#d0d0d0"></div>
<div class="a" style="left:991px;top:12px;width:12px;height:8px;background:#d0d0d0"></div>
<div class="a" style="left:991px;top:21px;width:12px;height:8px;background:#d0d0d0"></div>
<svg class="a" style="left:1013px;top:15px" width="14" height="10"><path d="M2 2 L7 7 L12 2" stroke="#e0e0e0" stroke-width="2" fill="none"/></svg>
<svg class="a" style="left:1040px;top:0px" width="50" height="44"><g fill="#cfcfcf"><path d="M37 9 C30 10 20 16 17 24 L21.5 28 C29 25 35 16 37 9Z"/><path d="M11.5 22 C14 17 18 14 23 13.5 C20 16 17 20 16 23.5Z"/><path d="M23.5 34 C28 31 31.5 27 32.5 22.5 C29 25.5 26 28 22.5 29.5Z"/></g></svg>
<div class="a" style="left:1367px;top:6px;width:1px;height:32px;background:#464646"></div>
<div class="a menu" style="left:1385px;top:8px;font-size:18px">传统基本功能</div>
<svg class="a" style="left:1508px;top:17px" width="14" height="10"><path d="M2 2 L7 7 L12 2" stroke="#e0e0e0" stroke-width="2" fill="none"/></svg>
<div class="a" style="left:1541px;top:6px;width:1px;height:32px;background:#464646"></div>
<div class="a" style="left:1555px;top:7px;width:193px;height:29px;background:#474747;border:1px solid #4e4e4e;border-radius:3px"></div>
<svg class="a" style="left:1560px;top:10px" width="30" height="24"><circle cx="14" cy="10" r="6" stroke="#d8d8d8" stroke-width="2" fill="none"/><path d="M10 14 L3 21" stroke="#d8d8d8" stroke-width="2"/><path d="M20 15 L26 15 L23 19Z" fill="#d8d8d8"/></svg>
<div class="a" style="left:1592px;top:10px;font-size:16px;color:#8a8a8a;font-family:'Liberation Mono',monospace;white-space:nowrap;letter-spacing:-0.4px">搜索 Adobe Stock</div>
<div class="a" style="left:1762px;top:0;width:152px;height:27px;border:1px solid #4c4c4c;border-top:none;border-radius:0 0 3px 3px"></div>
<div class="a" style="left:1804px;top:0;width:1px;height:27px;background:#4c4c4c"></div>
<div class="a" style="left:1845px;top:0;width:1px;height:27px;background:#4c4c4c"></div>
<div class="a" style="left:1775px;top:16px;width:14px;height:4px;background:#bdbdbd"></div>
<svg class="a" style="left:1814px;top:6px" width="22" height="18"><rect x="7" y="2" width="11" height="8" stroke="#bdbdbd" stroke-width="2.5" fill="none"/><rect x="2" y="7" width="11" height="8" stroke="#bdbdbd" stroke-width="2.5" fill="#535353"/></svg>
<svg class="a" style="left:1871px;top:6px" width="20" height="16"><path d="M3 2 L17 14 M17 2 L3 14" stroke="#d6d6d6" stroke-width="3"/></svg>

<!-- CONTROL BAR -->
<div class="a" style="left:0;top:46px;width:3px;height:50px;background:#454545"></div>
<div class="a" style="left:8px;top:57px;width:3px;height:28px;background:repeating-linear-gradient(#2f2f2f 0 1px,transparent 1px 3px)"></div>
<div class="a" style="left:24px;top:57px;font-size:18px;color:#d2d2d2">路径</div>
<div class="a" style="left:153px;top:51px;width:1px;height:40px;background:#4a4a4a"></div>
<svg class="a" style="left:164px;top:57px" width="28" height="28"><rect x="0" y="0" width="28" height="28" fill="#f4f4f4"/><path d="M3 26 L26 3" stroke="#b02a30" stroke-width="2.5"/></svg>
<div class="a" style="left:194px;top:57px;width:26px;height:28px;background:#474747;border-radius:2px"></div>
<svg class="a" style="left:200px;top:67px" width="14" height="10"><path d="M2 2 L7 7 L12 2" stroke="#e6e6e6" stroke-width="2" fill="none"/></svg>
<div class="a" style="left:230px;top:57px;width:28px;height:28px;background:#000;border:1px solid #d8d8d8"></div>
<div class="a" style="left:237px;top:64px;width:14px;height:14px;border:1.5px solid #fff"></div><div class="a" style="left:240px;top:67px;width:8px;height:8px;background:#e0e0e0"></div>
<div class="a" style="left:259px;top:57px;width:26px;height:28px;background:#474747;border-radius:2px"></div>
<svg class="a" style="left:265px;top:67px" width="14" height="10"><path d="M2 2 L7 7 L12 2" stroke="#e6e6e6" stroke-width="2" fill="none"/></svg>
<div class="a" style="left:305px;top:59px;font-size:17px;color:#e4e4e4;font-family:'Liberation Serif',serif;white-space:nowrap;letter-spacing:0.8px">描边：</div>
<div class="a" style="left:305px;top:81px;width:48px;height:2px;background:repeating-linear-gradient(90deg,#d8d8d8 0 2px,transparent 2px 4px)"></div>
<div class="a" style="left:363px;top:57px;width:119px;height:29px;background:#474747;border-radius:2px"></div>
<div class="a" style="left:388px;top:57px;width:67px;height:29px;background:#424242"></div>
<div class="a" style="left:387px;top:57px;width:1px;height:29px;background:#3c3c3c"></div>
<div class="a" style="left:455px;top:57px;width:1px;height:29px;background:#3c3c3c"></div>
<svg class="a" style="left:368px;top:59px" width="16" height="25"><path d="M3 8 L8 3 L13 8 M3 17 L8 22 L13 17" stroke="#e6e6e6" stroke-width="2" fill="none"/></svg>
<div class="a" style="left:394px;top:61px;font-size:16px;color:#e8e8e8;font-family:'Liberation Mono',monospace;white-space:nowrap">6 pt</div>
<svg class="a" style="left:461px;top:67px" width="14" height="10"><path d="M2 2 L7 7 L12 2" stroke="#e6e6e6" stroke-width="2" fill="none"/></svg>
<div class="a" style="left:492px;top:57px;width:134px;height:29px;background:#e6e6e6"></div>
<div class="a" style="left:500px;top:69px;width:75px;height:4px;background:#000"></div>
<div class="a" style="left:583px;top:60px;font-size:17px;color:#333;font-family:'Liberation Serif',serif">等比</div>
<div class="a" style="left:626px;top:57px;width:27px;height:29px;background:#404040;border-radius:0 2px 2px 0"></div>
<svg class="a" style="left:632px;top:67px" width="14" height="10"><path d="M2 2 L7 7 L12 2" stroke="#e6e6e6" stroke-width="2" fill="none"/></svg>
<div class="a" style="left:663px;top:57px;width:130px;height:29px;background:#e6e6e6"></div>
<div class="a" style="left:671px;top:69px;width:71px;height:4px;background:#000"></div>
<div class="a" style="left:749px;top:60px;font-size:17px;color:#333;font-family:'Liberation Serif',serif">基本</div>
<div class="a" style="left:793px;top:57px;width:27px;height:29px;background:#404040;border-radius:0 2px 2px 0"></div>
<svg class="a" style="left:799px;top:67px" width="14" height="10"><path d="M2 2 L7 7 L12 2" stroke="#e6e6e6" stroke-width="2" fill="none"/></svg>
<div class="a" style="left:832px;top:59px;font-size:17px;color:#e4e4e4;font-family:'Liberation Serif',serif;white-space:nowrap;letter-spacing:1.6px">不透明度：</div>
<div class="a" style="left:832px;top:81px;width:85px;height:2px;background:repeating-linear-gradient(90deg,#d8d8d8 0 2px,transparent 2px 4px)"></div>
<div class="a" style="left:925px;top:57px;width:103px;height:29px;background:#474747;border-radius:2px"></div>
<div class="a" style="left:927px;top:57px;width:74px;height:29px;background:#404040"></div>
<div class="a" style="left:931px;top:61px;font-size:15px;color:#f0f0f0">100%</div>
<svg class="a" style="left:1008px;top:63px" width="12" height="16"><path d="M3 2 L8 8 L3 14" stroke="#e6e6e6" stroke-width="2" fill="none"/></svg>
<div class="a" style="left:1037px;top:60px;font-size:17px;color:#b8b8b8;font-family:'Liberation Serif',serif;white-space:nowrap;letter-spacing:0.8px">样式：</div>
<div class="a" style="left:1097px;top:57px;width:28px;height:29px;background:#e2e2e2"></div>
<div class="a" style="left:1126px;top:57px;width:26px;height:29px;background:#474747;border-radius:0 2px 2px 0"></div>
<svg class="a" style="left:1132px;top:67px" width="14" height="10"><path d="M2 2 L7 7 L12 2" stroke="#e6e6e6" stroke-width="2" fill="none"/></svg>
<div class="a" style="left:1164px;top:51px;width:1px;height:40px;background:#4a4a4a"></div>
<svg class="a" style="left:1178px;top:57px" width="27" height="27" viewBox="0 0 27 27"><path d="M13.5 13.5 L9.29 3.34 A11 11 0 0 1 17.71 3.34Z" fill="#6c6c6c"/><path d="M13.5 13.5 L17.71 3.34 A11 11 0 0 1 23.66 9.29Z" fill="#5c5c5c"/><path d="M13.5 13.5 L23.66 9.29 A11 11 0 0 1 23.66 17.71Z" fill="#6e6e6e"/><path d="M13.5 13.5 L23.66 17.71 A11 11 0 0 1 17.71 23.66Z" fill="#8c8c8c"/><path d="M13.5 13.5 L17.71 23.66 A11 11 0 0 1 9.29 23.66Z" fill="#9c9c9c"/><path d="M13.5 13.5 L9.29 23.66 A11 11 0 0 1 3.34 17.71Z" fill="#b8b8b8"/><path d="M13.5 13.5 L3.34 17.71 A11 11 0 0 1 3.34 9.29Z" fill="#a4a4a4"/><path d="M13.5 13.5 L3.34 9.29 A11 11 0 0 1 9.29 3.34Z" fill="#7c7c7c"/><path d="M12.16 10.27 L9.29 3.34 M14.84 10.27 L17.71 3.34 M16.73 12.16 L23.66 9.29 M16.73 14.84 L23.66 17.71 M14.84 16.73 L17.71 23.66 M12.16 16.73 L9.29 23.66 M10.27 14.84 L3.34 17.71 M10.27 12.16 L3.34 9.29" stroke="#dcdcdc" stroke-width="1.3"/><circle cx="13.5" cy="13.5" r="11" stroke="#dcdcdc" stroke-width="1.6" fill="none"/><circle cx="13.5" cy="13.5" r="3.3" fill="#dcdcdc"/><circle cx="13.5" cy="13.5" r="2.2" fill="#333"/></svg>
<div class="a" style="left:1220px;top:51px;width:1px;height:40px;background:#4a4a4a"></div>
<svg class="a" style="left:1238px;top:58px" width="40" height="26"><rect x="3" y="3" width="19" height="19" stroke="#c8c8c8" stroke-width="1.5" stroke-dasharray="3 2" fill="none"/><g fill="#c8c8c8"><rect x="1" y="1" width="4" height="4"/><rect x="10.5" y="1" width="4" height="4"/><rect x="20" y="1" width="4" height="4"/><rect x="1" y="10.5" width="4" height="4"/><rect x="20" y="10.5" width="4" height="4"/><rect x="1" y="20" width="4" height="4"/><rect x="10.5" y="20" width="4" height="4"/><rect x="20" y="20" width="4" height="4"/></g><path d="M27 10 L31.5 14 L36 10" stroke="#c8c8c8" stroke-width="1.5" fill="none"/></svg>
<div class="a" style="left:1293px;top:51px;width:1px;height:40px;background:#4a4a4a"></div>
<div class="a" style="left:1306px;top:60px;font-size:17px;color:#ececec;font-family:'Liberation Serif',serif;white-space:nowrap">变换</div>
<div class="a" style="left:1306px;top:81px;width:36px;height:2px;background:repeating-linear-gradient(90deg,#d8d8d8 0 2px,transparent 2px 4px)"></div>
<div class="a" style="left:1351px;top:51px;width:1px;height:40px;background:#4a4a4a"></div>
<svg class="a" style="left:1366px;top:58px" width="28" height="26"><rect x="7" y="9" width="13" height="9" stroke="#d0d0d0" stroke-width="1.5" fill="#777"/><g stroke="#d0d0d0" stroke-width="1.5" fill="none"><path d="M2 2 L6 6 M2 24 L6 20 M26 2 L22 6 M26 24 L22 20"/><path d="M3 6 H6 V3 M3 20 H6 V23 M25 6 H22 V3 M25 20 H22 V23"/></g></svg>
<svg class="a" style="left:1411px;top:57px" width="50" height="28"><rect x="3" y="8" width="9" height="9" stroke="#d0d0d0" stroke-width="1.5" fill="#777"/><rect x="16" y="2" width="9" height="9" stroke="#d0d0d0" stroke-width="1.5" fill="#777"/><path d="M11 12 L11 26 L15 22 L23 22Z" fill="#cfcfcf"/><path d="M38 9 L42.5 13 L47 9" stroke="#e6e6e6" stroke-width="2" fill="none"/></svg>
<svg class="a" style="left:1764px;top:60px" width="24" height="24"><g fill="#d6d6d6"><rect x="3" y="2" width="7" height="7"/><rect x="13" y="2" width="7" height="7"/><rect x="3" y="12" width="7" height="7"/><rect x="13" y="12" width="7" height="7"/></g><path d="M11.5 0 V22 M1 10.5 H22" stroke="#888" stroke-width="1"/></svg>
<svg class="a" style="left:1802px;top:58px" width="48" height="26"><g fill="#d6d6d6"><rect x="2" y="2" width="6" height="6"/><rect x="2" y="10" width="6" height="6"/><rect x="2" y="18" width="6" height="6"/></g><path d="M11 9 H17 A5 5 0 0 1 17 19 H11" stroke="#d6d6d6" stroke-width="3" fill="none"/><path d="M35 10 L40 15 L45 10" stroke="#707070" stroke-width="1.5" fill="none"/></svg>
<svg class="a" style="left:1875px;top:63px" width="22" height="18"><g fill="#d6d6d6"><rect x="1" y="1" width="3" height="3"/><rect x="1" y="6" width="3" height="3"/><rect x="1" y="11" width="3" height="3"/><rect x="7" y="2" width="13" height="2"/><rect x="7" y="7" width="13" height="2"/><rect x="7" y="12" width="13" height="2"/></g></svg>
<!-- SCORE WIDGET -->
<div class="a" style="left:1776px;top:730px;width:101px;height:55px;border-radius:0 28px 28px 0;background:linear-gradient(#535a66,#30353c);box-shadow:0 1px 2px rgba(0,0,0,.6)"></div>
<svg class="a" style="left:1776px;top:726px" width="40" height="64"><path d="M2 3 H28 L26 9 H2Z" fill="#cdb574" stroke="#6a5a30" stroke-width=".8"/><path d="M28 3 H40 L37 9 H25Z" fill="#bfa563" stroke="#6a5a30" stroke-width=".8"/><path d="M2 55 H28 L26 61 H2Z" fill="#cdb574" stroke="#6a5a30" stroke-width=".8"/><path d="M28 55 H40 L37 61 H25Z" fill="#bfa563" stroke="#6a5a30" stroke-width=".8"/></svg>
<div class="a" style="left:1701px;top:713px;width:87px;height:87px;border-radius:50%;background:radial-gradient(circle at 50% 22%,#ffffff 0%,#c8b8ff 4%,#7b63d6 16%,#5f48c4 50%,#4c37a8 100%);border:5px solid #c9b26e;box-shadow:0 0 0 1px #3a2f1a, inset 0 0 0 1px #2a2050"></div>
<svg class="a" style="left:1718px;top:782px" width="54" height="22"><path d="M4 4 C14 14 22 16 27 18 C32 16 40 14 50 4 L46 3 C38 10 32 13 27 14 C22 13 16 10 8 3Z" fill="#c9b26e" stroke="#4a3d20" stroke-width=".8"/><circle cx="27" cy="14.5" r="3.2" fill="#c04a9a" stroke="#e8d090" stroke-width="1.2"/></svg>
<div class="a" style="left:1711px;top:738px;width:72px;text-align:center;white-space:nowrap;color:#ebe4ff"><span style="font-size:29px;line-height:36px">88</span><span style="font-size:12px">分</span></div>
<svg class="a" style="left:1796px;top:742px" width="14" height="34"><path d="M6.5 1 L11 6 H8.5 V11 H4.5 V6 H2Z" fill="#e8702a"/><path d="M4.5 21 H8.5 V26 H11 L6.5 31 L2 26 H4.5Z" fill="#5cc030"/></svg>
<div class="a" style="left:1814px;top:741px;font-size:11px;color:#eee;line-height:14px">0.02K/s</div>
<div class="a" style="left:1820px;top:760px;font-size:11px;color:#eee;line-height:14px">0.3K/s</div>
</body></html>
